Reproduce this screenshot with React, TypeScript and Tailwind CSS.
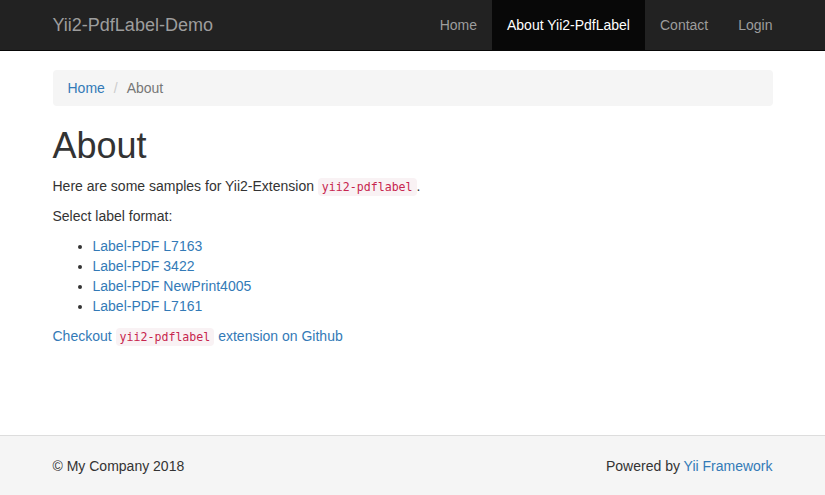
import React from 'react'

const sans = "font-['Liberation_Sans','Helvetica_Neue',Helvetica,Arial,sans-serif]"
const codeCls =
  "font-['DejaVu_Sans_Mono',Consolas,monospace] text-[11.6px] leading-[16px] px-1 py-[2px] rounded bg-[#f9f2f4] text-[#c7254e]"

const navItems = [
  { label: 'Home', active: false },
  { label: 'About Yii2-PdfLabel', active: true },
  { label: 'Contact', active: false },
  { label: 'Login', active: false },
]

const labels = ['Label-PDF L7163', 'Label-PDF 3422', 'Label-PDF NewPrint4005', 'Label-PDF L7161']

export default function App() {
  return (
    <div className={`${sans} flex flex-col min-h-screen text-[14px] leading-[20px] text-[#333] bg-white`}>
      {/* navbar */}
      <nav className="bg-[#222] border-b border-[#080808]">
        <div className="w-[750px] mx-auto px-[15px] flex justify-between h-[50px]">
          <a href="#" className="-ml-[15px] px-[15px] py-[15px] text-[18px] leading-[20px] text-[#9d9d9d]">
            Yii2-PdfLabel-Demo
          </a>
          <ul className="flex -mr-[15px]">
            {navItems.map((item) => (
              <li key={item.label}>
                <a
                  href="#"
                  className={
                    item.active
                      ? 'block px-[15px] py-[15px] text-white bg-[#080808]'
                      : 'block px-[15px] py-[15px] text-[#9d9d9d]'
                  }
                >
                  {item.label}
                </a>
              </li>
            ))}
          </ul>
        </div>
      </nav>

      {/* content */}
      <main className="flex-1">
        <div className="w-[750px] mx-auto px-[15px] pt-[19px] pb-5">
          <ol className="flex px-[15px] py-2 mb-5 bg-[#f5f5f5] rounded">
            <li>
              <a href="#" className="text-[#337ab7]">Home</a>
            </li>
            <li className="ml-1 text-[#777]">
              <span className="px-[5px] text-[#ccc]">/{'\u00a0'}</span>
              About
            </li>
          </ol>

          <h1 className="mt-5 mb-[10px] text-[36px] leading-[1.1] font-medium">About</h1>

          <p className="mb-[10px]">
            Here are some samples for Yii2-Extension <code className={codeCls}>yii2-pdflabel</code>.
          </p>
          <p className="mb-[10px]">Select label format:</p>

          <ul className="list-disc pl-10 mb-[10px]">
            {labels.map((l) => (
              <li key={l}>
                <a href="#" className="text-[#337ab7]">{l}</a>
              </li>
            ))}
          </ul>

          <p className="mb-[10px]">
            <a href="#" className="text-[#337ab7]">
              Checkout <code className={codeCls}>yii2-pdflabel</code> extension on Github
            </a>
          </p>
        </div>
      </main>

      {/* footer */}
      <footer className="h-[60px] bg-[#f5f5f5] border-t border-[#ddd] pt-5">
        <div className="w-[750px] mx-auto px-[15px] flex justify-between">
          <p>© My Company 2018</p>
          <p>
            Powered by <a href="#" className="text-[#337ab7]">Yii Framework</a>
          </p>
        </div>
      </footer>
    </div>
  )
}
